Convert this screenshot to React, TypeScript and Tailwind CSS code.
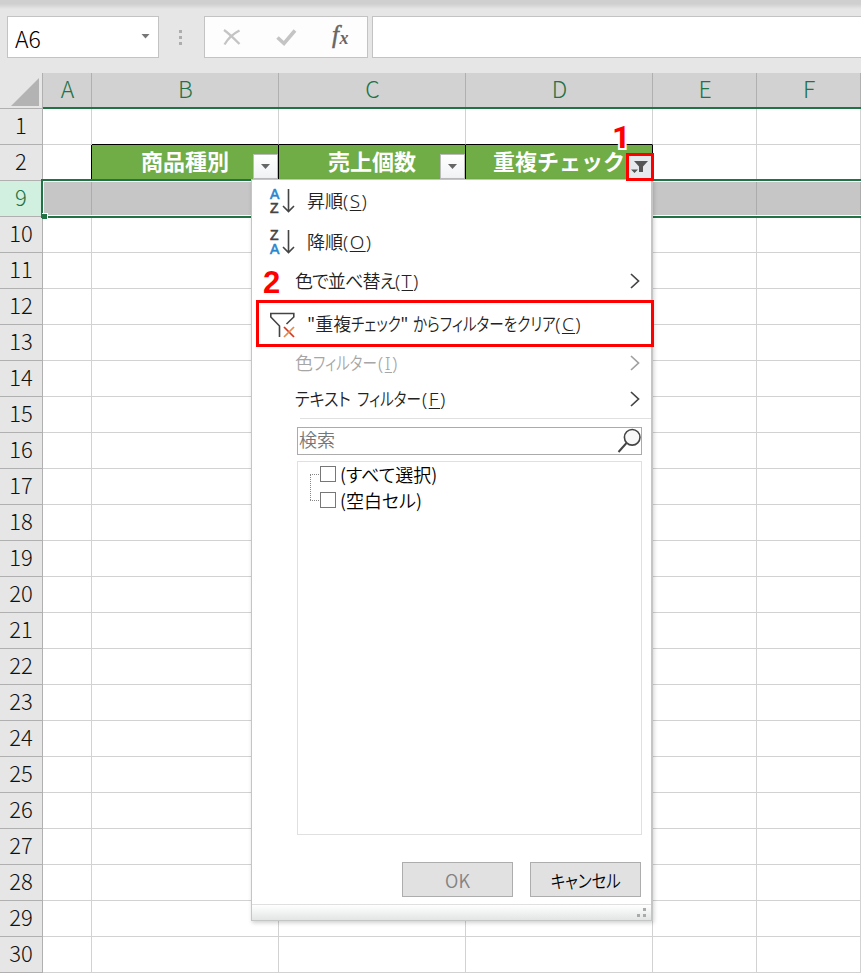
import { ReactNode } from "react";

const columns = [
  { name: "A", width: "w-[49px]" },
  { name: "B", width: "w-[187px]" },
  { name: "C", width: "w-[187px]" },
  { name: "D", width: "w-[187px]" },
  { name: "E", width: "w-[104px]" },
  { name: "F", width: "w-[104px]" },
];

const headings: Record<string, string> = {
  B: "商品種別",
  C: "売上個数",
  D: "重複チェック",
};

// rows 3 to 8 are hidden by the filter
const rows = [1, 2, 9, ...Array.from({ length: 21 }, (_, i) => i + 10)];

function FormulaBar() {
  return (
    <div className="flex h-[73px] items-start bg-linear-to-b from-[#cfcfcf] from-[4px] to-[#e6e6e6] to-[9px] pt-4 pl-[7px]">
      <div className="flex h-[42px] w-[152px] items-center justify-between border border-[#c3c3c3] bg-white pr-2 pl-[7px]">
        <span className="pt-[2px] text-[23px] leading-none">A6</span>
        <svg width="9" height="5" className="mb-[2px]">
          <path d="M0.500 0h8L4.500 4.500z" fill="#777" />
        </svg>
      </div>
      <div className="ml-5 flex h-[42px] w-[3px] flex-col justify-center gap-[3px]">
        <i className="size-[3px] bg-[#adadad]" />
        <i className="size-[3px] bg-[#adadad]" />
        <i className="size-[3px] bg-[#adadad]" />
      </div>
      <div className="ml-[22px] flex h-[42px] w-[164px] items-center border border-[#c3c3c3] bg-[#fdfdfd]">
        <svg width="162" height="40" fill="none">
          <path d="M19 13c4.500 3 10 8.500 15.500 14" stroke="#c4c4c4" strokeWidth="2.300" />
          <path d="M34.500 13.500c-6 3-11.500 8-15 14" stroke="#c4c4c4" strokeWidth="2.300" />
          <path d="M72.500 20.500l6.500 6L90 13.500" stroke="#c4c4c4" strokeWidth="3.600" />
          <text x="127" y="26" fill="#666" stroke="#666" strokeWidth="0.500" fontSize="25" fontStyle="italic" fontFamily="Liberation Serif, serif">
            f
          </text>
          <text x="134.500" y="27" fill="#666" fontSize="18" fontStyle="italic" fontWeight="bold" fontFamily="Liberation Serif, serif">
            x
          </text>
        </svg>
      </div>
      <div className="ml-1 h-[42px] flex-1 border border-r-0 border-[#c3c3c3] bg-white" />
    </div>
  );
}

function ColumnHeader() {
  return (
    <div className="flex h-9">
      <div className="flex w-[43px] shrink-0 items-end justify-end border-r border-b border-[#b0b0b0] bg-[#e6e6e6] pr-[3px] pb-[2px]">
        <svg width="28" height="28">
          <path d="M28 0v28H0z" fill="#b3b3b3" />
        </svg>
      </div>
      {columns.map((c) => (
        <div
          key={c.name}
          className={`${c.width} flex shrink-0 items-center justify-center border-b-2 border-[#217346] bg-[#d2d2d2] pb-[3px] text-[23px] leading-none text-[#217346] shadow-[inset_-1px_0_#b0b0b0]`}
        >
          {c.name}
        </div>
      ))}
    </div>
  );
}

function Row({ number }: { number: number }) {
  const selected = number === 9;
  return (
    <div className="flex h-9">
      <div
        className={`flex w-[43px] shrink-0 items-center justify-center border-r border-b border-[#b0b0b0] pb-[5px] text-[22px] leading-none ${
          selected ? "bg-[#d2f0e0] text-[#217346]" : "bg-[#e6e6e6] text-[#111]"
        }`}
      >
        {number}
      </div>
      {columns.map((c) => {
        const heading = number === 2 ? headings[c.name] : undefined;
        let look = "border-[#d2d2d2] bg-white";
        if (selected) look = "border-[#acacac] bg-[#c6c6c6]";
        if (heading) look = "border-black bg-[#70ad47]";
        if (number === 1 && headings[c.name]) look = "border-r-[#d2d2d2] border-b-black bg-white";
        if (number === 2 && c.name === "A") look = "border-r-black border-b-[#d2d2d2] bg-white";
        return (
          <div
            key={c.name}
            className={`${c.width} ${look} flex shrink-0 items-center justify-center border-r border-b pb-[6px] text-[22px] leading-none font-bold text-white`}
          >
            {heading}
          </div>
        );
      })}
    </div>
  );
}

function Chevron({ muted }: { muted?: boolean }) {
  return (
    <svg width="10" height="16" fill="none" className="mr-[11px] mb-[2px] ml-auto">
      <path d="M1 1l7.500 7L1 15" stroke={muted ? "#a0a0a0" : "#444"} strokeWidth="1.700" />
    </svg>
  );
}

function SortIcon({ letters }: { letters: string }) {
  return (
    <svg
      width="26"
      height="28"
      fill="none"
      className="overflow-visible"
      fontFamily="Liberation Sans, sans-serif"
      fontSize="14"
    >
      {[...letters].map((letter, i) => (
        <text
          key={letter}
          x="0"
          y={i === 0 ? 11 : 24.5}
          fill={letter === "A" ? "#2b84cc" : "#444"}
          stroke={letter === "A" ? "#2b84cc" : "#444"}
          strokeWidth="0.600"
        >
          {letter}
        </text>
      ))}
      <path d="M18.500 1v22M13 18l5.500 5.500 5.500-5.500" stroke="#444" strokeWidth="1.600" />
    </svg>
  );
}

function ClearFilterIcon() {
  return (
    <svg width="26" height="26" fill="none">
      <path d="M9.500 25V14L0.800 5V1.500h23V5L16.500 12" stroke="#444" strokeWidth="1.600" />
      <path d="M14 15l10 10" stroke="#d8341a" strokeWidth="1.700" />
      <path d="M24 15l-10 10" stroke="#e58a4e" strokeWidth="1.700" />
    </svg>
  );
}

// narrow katakana, squeezed into the width of its box
function Kana({ width, scale = "scale-x-[0.81]", children }: { width: string; scale?: string; children: string }) {
  return (
    <span className={`inline-block ${width}`}>
      <span className={`inline-block origin-left ${scale}`}>{children}</span>
    </span>
  );
}

type MenuItemProps = {
  className: string;
  children: ReactNode;
  hotkey: string;
  icon?: ReactNode;
  arrow?: boolean;
  muted?: boolean;
};

function MenuItem({ className, children, hotkey, icon, arrow, muted }: MenuItemProps) {
  return (
    <div className={`flex items-center ${className} ${muted ? "text-[#a6a6a6]" : "text-[#222]"}`}>
      {icon && <span className="ml-[18px] w-[37px]">{icon}</span>}
      <span className={`${icon ? "" : "ml-[43px]"} flex items-baseline pb-[2px] whitespace-nowrap`}>
        {children}
        <span className="font-['Noto_Sans',sans-serif] text-[19px] tracking-[1.4px]">
          (<span className="underline underline-offset-2">{hotkey}</span>)
        </span>
      </span>
      {arrow && <Chevron muted={muted} />}
    </div>
  );
}

function CheckItem({ label }: { label: string }) {
  return (
    <div className="flex h-[26px] items-center">
      <i className="mr-[1px] w-[9px] border-t border-dotted border-[#888]" />
      <i className="size-4 border border-[#777] bg-white" />
      <span className="ml-1 text-[18px] leading-none text-black">{label}</span>
    </div>
  );
}

function FilterMenu() {
  return (
    <div className="absolute top-[179px] left-[251px] flex h-[742px] w-[402px] flex-col border border-r-2 border-[#c4c6c6] bg-white text-[18px] leading-none font-[350] shadow-[1px_2px_4px_rgba(0,0,0,0.18)] [font-feature-settings:'palt']">
      <MenuItem className="h-[43px]" hotkey="S" icon={<SortIcon letters="AZ" />}>
        昇順
      </MenuItem>
      <MenuItem className="h-10" hotkey="O" icon={<SortIcon letters="ZA" />}>
        降順
      </MenuItem>
      <MenuItem className="h-[38px]" hotkey="T" arrow>
        <span className="tracking-[-0.9px]">色で並べ替え</span>
      </MenuItem>
      <MenuItem className="h-[45px] pt-[2px]" hotkey="C" icon={<ClearFilterIcon />}>
        <span>"重複</span>
        <Kana width="w-[49px]">チェック</Kana>
        <span className="w-[13px]">"</span>
        <Kana width="w-[142px]">からフィルターをクリア</Kana>
      </MenuItem>
      <MenuItem className="h-9" hotkey="I" arrow muted>
        <span>色</span>
        <Kana width="w-[65px]">フィルター</Kana>
      </MenuItem>
      <MenuItem className="h-9" hotkey="F" arrow>
        <Kana width="w-[62px]" scale="scale-x-[0.89]">
          テキスト
        </Kana>
        <Kana width="w-[65px]">フィルター</Kana>
      </MenuItem>
      <hr className="ml-12 border-[#e0e0e0]" />

      <div className="mt-2 mr-[9px] ml-[45px] flex h-7 items-center justify-between border border-[#ababab] pl-[1px] text-[#767676]">
        <span className="pb-1">検索</span>
        <svg width="25" height="26" fill="none">
          <circle cx="16.200" cy="9.300" r="7.800" fill="#f8f8f8" stroke="#444" strokeWidth="1.600" />
          <path d="M10.500 15L2.500 24" stroke="#444" strokeWidth="2" />
        </svg>
      </div>

      <div className="mt-[6px] mr-[9px] ml-[45px] h-[374px] border border-[#e0e0e0] pl-3">
        <div className="relative -mt-px">
          <i className="absolute top-[13px] left-0 h-[26px] border-l border-dotted border-[#888]" />
          <CheckItem label="(すべて選択)" />
          <CheckItem label="(空白セル)" />
        </div>
      </div>

      <div className="mt-[27px] mr-[10px] flex justify-end gap-[17px]">
        <button className="h-[35px] w-[111px] border border-[#adadad] bg-[#e1e1e1] text-[#838383]">OK</button>
        <button className="h-[35px] w-[111px] border border-[#adadad] bg-[#e1e1e1] text-black">
          <span className="inline-block scale-x-[0.86]">キャンセル</span>
        </button>
      </div>

      <div className="mt-[7px] flex flex-1 items-center justify-end border-t border-[#e0e0e0] bg-linear-to-b from-white to-[#e3e5e5] pr-[5px]">
        <svg width="9" height="9" fill="#aaa">
          <path d="M6 0h3v3h-3zM0 6h3v3h-3zM6 6h3v3h-3z" />
        </svg>
      </div>
    </div>
  );
}

function FilterButton({ className }: { className: string }) {
  return (
    <div
      className={`absolute top-[154px] flex size-[25px] items-center justify-center border border-[#bcbcbc] bg-linear-to-b from-white to-[#f0f2f5] ${className}`}
    >
      <svg width="9" height="5">
        <path d="M0 0h9L4.500 5z" fill="#666" />
      </svg>
    </div>
  );
}

export default function App() {
  return (
    <main className="relative h-[973px] w-[861px] overflow-hidden bg-white font-['Noto_Sans_CJK_JP',sans-serif] font-light">
      <FormulaBar />
      <ColumnHeader />
      {rows.map((n) => (
        <Row key={n} number={n} />
      ))}

      <div className="absolute top-[179px] left-[41px] h-[39px] w-[830px] border-2 border-[#217346] shadow-[inset_0_0_0_1px_white]" />
      <div className="absolute top-[213px] left-[42px] size-[6px] border-t border-r border-white bg-[#217346]" />

      <FilterButton className="left-[253px]" />
      <FilterButton className="left-[440px]" />
      <FilterMenu />

      <div className="absolute top-[153px] left-[626px] size-7 border-3 border-[#f00] bg-[#e6eaee]">
        <svg width="22" height="22" fill="#555">
          <path d="M5 5h14l-5 5.500v5.500h-4v-5.500zM2 13.500h7l-3.500 3.500z" />
        </svg>
      </div>
      <div className="absolute top-[300px] left-[256px] h-[47px] w-[398px] border-3 border-[#f00]" />
      <span className="absolute top-[121px] left-[612px] font-[Roboto,sans-serif] text-[32px] leading-8 font-bold text-[#f00] [paint-order:stroke_fill] [-webkit-text-stroke:4px_white]">
        1
      </span>
      <span className="absolute top-[267px] left-[263px] font-['Liberation_Sans',sans-serif] text-[31px] leading-8 font-bold text-[#f00]">
        2
      </span>
    </main>
  );
}
